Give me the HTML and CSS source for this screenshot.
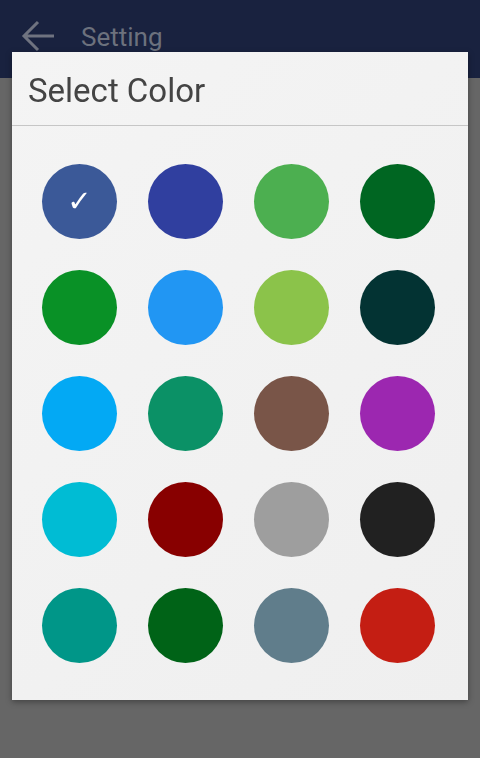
FILE: index.html
```html
<!DOCTYPE html>
<html lang="en">
<head>
    <meta charset="UTF-8">
    <title>Setting</title>
    <meta name="viewport" content="width=device-width, initial-scale=1.0">
    <link rel="stylesheet" href="styles.css">
</head>
<body>
    <header class="app-bar">
        <svg class="back-icon" width="36" height="36" viewBox="0 0 36 36">
            <path d="M34 17H4M18 3L4 17l14 14" fill="none" stroke="#6f7380" stroke-width="3"/>
        </svg>
        <span class="app-title">Setting</span>
    </header>
    <main class="page"></main>

    <div class="scrim">
        <div class="dialog">
            <h2 class="dialog-title">Select Color</h2>
            <div class="swatches">
                <button class="swatch selected" style="background:#3b5998">✓</button>
                <button class="swatch" style="background:#303f9f"></button>
                <button class="swatch" style="background:#4caf50"></button>
                <button class="swatch" style="background:#006622"></button>

                <button class="swatch" style="background:#099126"></button>
                <button class="swatch" style="background:#2196f3"></button>
                <button class="swatch" style="background:#8bc34a"></button>
                <button class="swatch" style="background:#033333"></button>

                <button class="swatch" style="background:#03a9f4"></button>
                <button class="swatch" style="background:#0b9166"></button>
                <button class="swatch" style="background:#795548"></button>
                <button class="swatch" style="background:#9c27b0"></button>

                <button class="swatch" style="background:#00bcd4"></button>
                <button class="swatch" style="background:#880000"></button>
                <button class="swatch" style="background:#9e9e9e"></button>
                <button class="swatch" style="background:#212121"></button>

                <button class="swatch" style="background:#009688"></button>
                <button class="swatch" style="background:#006317"></button>
                <button class="swatch" style="background:#607d8b"></button>
                <button class="swatch" style="background:#c41e13"></button>
            </div>
        </div>
    </div>
</body>
</html>
```

FILE: styles.css
```css
html, body {
    height: 100%;
}

body {
    font-family: Roboto, 'Noto Sans', sans-serif;
    background-color: #666666;
    margin: 0;
    display: flex;
    flex-direction: column;
}

.app-bar {
    height: 78px;
    background-color: #19223f;
    display: flex;
    align-items: center;
    padding: 0 0 4px 20px;
    box-sizing: border-box;
}

.back-icon {
    display: block;
    margin-right: 25px;
}

.app-title {
    font-size: 26px;
    color: #6c717d;
}

.page {
    flex: 1;
}

.scrim {
    position: fixed;
    inset: 0;
    padding: 52px 12px 0;
}

.dialog {
    background: linear-gradient(135deg, #f4f4f4, #efefef);
    box-shadow: 0 2px 6px rgba(0, 0, 0, 0.35);
}

.dialog-title {
    margin: 0;
    padding: 20px 16px 15px;
    font-size: 33px;
    line-height: 38px;
    font-weight: 400;
    color: #444444;
    border-bottom: 1px solid #c6c6c6;
}

.swatches {
    display: grid;
    grid-template-columns: repeat(4, 75px);
    gap: 31px;
    padding: 38px 30px 37px;
}

.swatch {
    width: 75px;
    height: 75px;
    border: none;
    border-radius: 50%;
    padding: 0;
    color: #fff;
    font-family: 'DejaVu Sans', sans-serif;
    font-size: 29px;
    font-weight: bold;
    line-height: 75px;
    text-align: center;
}
```
